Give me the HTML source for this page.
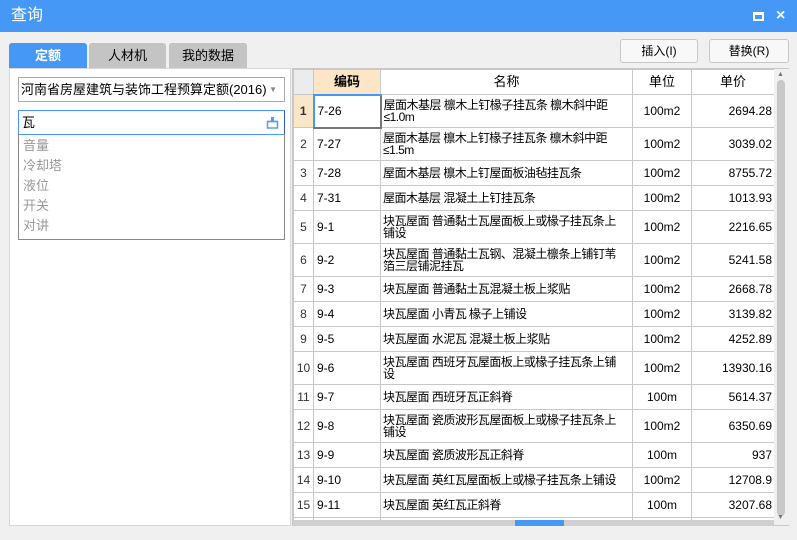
<!DOCTYPE html>
<html><head><meta charset="utf-8"><style>
*{box-sizing:border-box;margin:0;padding:0}
body{width:797px;height:540px;overflow:hidden;background:#f0f0f0;font-family:"Liberation Sans","Noto Sans CJK SC",sans-serif;font-size:12px;color:#000;position:relative}
.a{position:absolute}
#title{left:0;top:0;width:797px;height:32px;background:#4598f6;color:#fff;font-size:16px;line-height:32px;padding-left:11px}
.tab{top:43px;height:25px;line-height:25px;text-align:center;font-size:13px;border-radius:3px 3px 0 0}
.btn{top:39px;height:24px;border:1px solid #c8c8c8;border-radius:3px;background:#f8f8f8;text-align:center;line-height:22px;font-size:12px}
#tw{position:absolute;left:293px;top:69px;width:481px;height:451px;overflow:hidden}
table{border-collapse:collapse;table-layout:fixed;width:481px}
td{border:1px solid #c8c8c8;background:#fff;font-size:12px;line-height:12px;padding:0 2px;overflow:hidden}
td.m{letter-spacing:-0.5px;padding:0 1px 0 2px}
td.n{background:#fff;text-align:center;color:#333;font-size:12px;padding:0}
td.u{text-align:center;font-size:12px}
td.p{text-align:right;font-size:12px}
td.c{padding-left:3px;font-size:12px}
.list div{height:20px;line-height:20px;color:#999;font-size:13px;padding-left:4px}
</style></head><body>
<div id="title" class="a">查询</div>
<div class="a" style="left:753px;top:12px;width:11px;height:9px;border:2px solid #fff;border-top-width:3px"></div>
<div class="a" style="left:776px;top:4px;color:#fff;font-size:16px;font-weight:bold;line-height:24px">×</div>
<div class="a tab" style="left:9px;width:78px;background:#4598f6;color:#fff;font-weight:bold">定额</div>
<div class="a tab" style="left:89px;width:77px;background:#c4c4c4">人材机</div>
<div class="a tab" style="left:169px;width:78px;background:#c4c4c4">我的数据</div>
<div class="a btn" style="left:620px;width:78px">插入(I)</div>
<div class="a btn" style="left:709px;width:80px">替换(R)</div>
<div class="a" style="left:9px;top:68px;width:282px;height:458px;background:#fff;border:1px solid #d8d8d8"></div>
<div class="a" style="left:18px;top:77px;width:267px;height:25px;border:1px solid #aaa;line-height:23px;padding-left:2px;font-size:13px">河南省房屋建筑与装饰工程预算定额(2016)<span style="position:absolute;right:7px;top:0;color:#888;font-size:8px">▼</span></div>
<div class="a" style="left:18px;top:110px;width:267px;height:25px;border:1px solid #4598f6;border-right-color:#2a5fa8;line-height:23px;padding-left:3px;font-size:13px">瓦
<svg class="a" style="right:5px;top:5px" width="13" height="13" viewBox="0 0 13 13"><rect x="1.5" y="5.5" width="10" height="6.5" fill="none" stroke="#5a9cf0" stroke-width="1.5"/><rect x="5" y="1" width="3" height="4" fill="#5a9cf0"/><line x1="1" y1="5.5" x2="12" y2="5.5" stroke="#5a9cf0" stroke-width="1.5"/></svg></div>
<div class="a list" style="left:18px;top:134px;width:267px;height:106px;border:1px solid #888;border-top:none;padding-top:2px"><div>音量</div><div>冷却塔</div><div>液位</div><div>开关</div><div>对讲</div></div>
<div class="a" style="left:292px;top:68px;width:497px;height:458px;background:#fff;border:1px solid #c8c8c8"></div>
<div id="tw"><table>
<colgroup><col style="width:20px"><col style="width:67px"><col style="width:252px"><col style="width:59px"><col style="width:83px"></colgroup>
<tr style="height:25px"><td style="background:#ececec"></td><td class="u" style="background:#fde5c8;font-weight:bold;font-size:13px;border-bottom:2px solid #4598f6">编码</td><td class="u" style="font-size:13px">名称</td><td class="u" style="font-size:13px">单位</td><td class="u" style="font-size:13px">单价</td></tr>
<tr style="height:33px"><td class="n" style="background:#fde5c8;font-weight:bold">1</td><td class="c" style="border:2px solid #777;border-left-color:#4598f6;border-top-color:#4598f6">7-26</td><td class="m">屋面木基层 檩木上钉椽子挂瓦条 檩木斜中距<br>≤1.0m</td><td class="u">100m2</td><td class="p">2694.28</td></tr>
<tr style="height:33px"><td class="n">2</td><td class="c">7-27</td><td class="m">屋面木基层 檩木上钉椽子挂瓦条 檩木斜中距<br>≤1.5m</td><td class="u">100m2</td><td class="p">3039.02</td></tr>
<tr style="height:25px"><td class="n">3</td><td class="c">7-28</td><td class="m">屋面木基层 檩木上钉屋面板油毡挂瓦条</td><td class="u">100m2</td><td class="p">8755.72</td></tr>
<tr style="height:25px"><td class="n">4</td><td class="c">7-31</td><td class="m">屋面木基层 混凝土上钉挂瓦条</td><td class="u">100m2</td><td class="p">1013.93</td></tr>
<tr style="height:33px"><td class="n">5</td><td class="c">9-1</td><td class="m">块瓦屋面 普通黏土瓦屋面板上或椽子挂瓦条上<br>铺设</td><td class="u">100m2</td><td class="p">2216.65</td></tr>
<tr style="height:33px"><td class="n">6</td><td class="c">9-2</td><td class="m">块瓦屋面 普通黏土瓦钢、混凝土檩条上铺钉苇<br>箔三层铺泥挂瓦</td><td class="u">100m2</td><td class="p">5241.58</td></tr>
<tr style="height:25px"><td class="n">7</td><td class="c">9-3</td><td class="m">块瓦屋面 普通黏土瓦混凝土板上浆贴</td><td class="u">100m2</td><td class="p">2668.78</td></tr>
<tr style="height:25px"><td class="n">8</td><td class="c">9-4</td><td class="m">块瓦屋面 小青瓦 椽子上铺设</td><td class="u">100m2</td><td class="p">3139.82</td></tr>
<tr style="height:25px"><td class="n">9</td><td class="c">9-5</td><td class="m">块瓦屋面 水泥瓦 混凝土板上浆贴</td><td class="u">100m2</td><td class="p">4252.89</td></tr>
<tr style="height:33px"><td class="n">10</td><td class="c">9-6</td><td class="m">块瓦屋面 西班牙瓦屋面板上或椽子挂瓦条上铺<br>设</td><td class="u">100m2</td><td class="p">13930.16</td></tr>
<tr style="height:25px"><td class="n">11</td><td class="c">9-7</td><td class="m">块瓦屋面 西班牙瓦正斜脊</td><td class="u">100m</td><td class="p">5614.37</td></tr>
<tr style="height:33px"><td class="n">12</td><td class="c">9-8</td><td class="m">块瓦屋面 瓷质波形瓦屋面板上或椽子挂瓦条上<br>铺设</td><td class="u">100m2</td><td class="p">6350.69</td></tr>
<tr style="height:25px"><td class="n">13</td><td class="c">9-9</td><td class="m">块瓦屋面 瓷质波形瓦正斜脊</td><td class="u">100m</td><td class="p">937</td></tr>
<tr style="height:25px"><td class="n">14</td><td class="c">9-10</td><td class="m" style="white-space:nowrap">块瓦屋面 英红瓦屋面板上或椽子挂瓦条上铺设</td><td class="u">100m2</td><td class="p">12708.9</td></tr>
<tr style="height:25px"><td class="n">15</td><td class="c">9-11</td><td class="m">块瓦屋面 英红瓦正斜脊</td><td class="u">100m</td><td class="p">3207.68</td></tr>
<tr style="height:25px"><td class="n"></td><td></td><td></td><td></td><td></td></tr>
</table></div>
<div class="a" style="left:774px;top:69px;width:15px;height:456px;background:#f0f0f0"></div>
<div class="a" style="left:777px;top:71px;color:#777;font-size:7px">▲</div>
<div class="a" style="left:777px;top:80px;width:8px;height:436px;background:#c8c8c8;border-radius:4px"></div>
<div class="a" style="left:777px;top:514px;color:#777;font-size:7px">▼</div>
<div class="a" style="left:293px;top:520px;width:481px;height:6px;background:#cfcfcf"></div>
<div class="a" style="left:515px;top:520px;width:49px;height:6px;background:#4598f6"></div>
<div class="a" style="left:0;top:526px;width:797px;height:14px;background:#f0f0f0"></div>
</body></html>
